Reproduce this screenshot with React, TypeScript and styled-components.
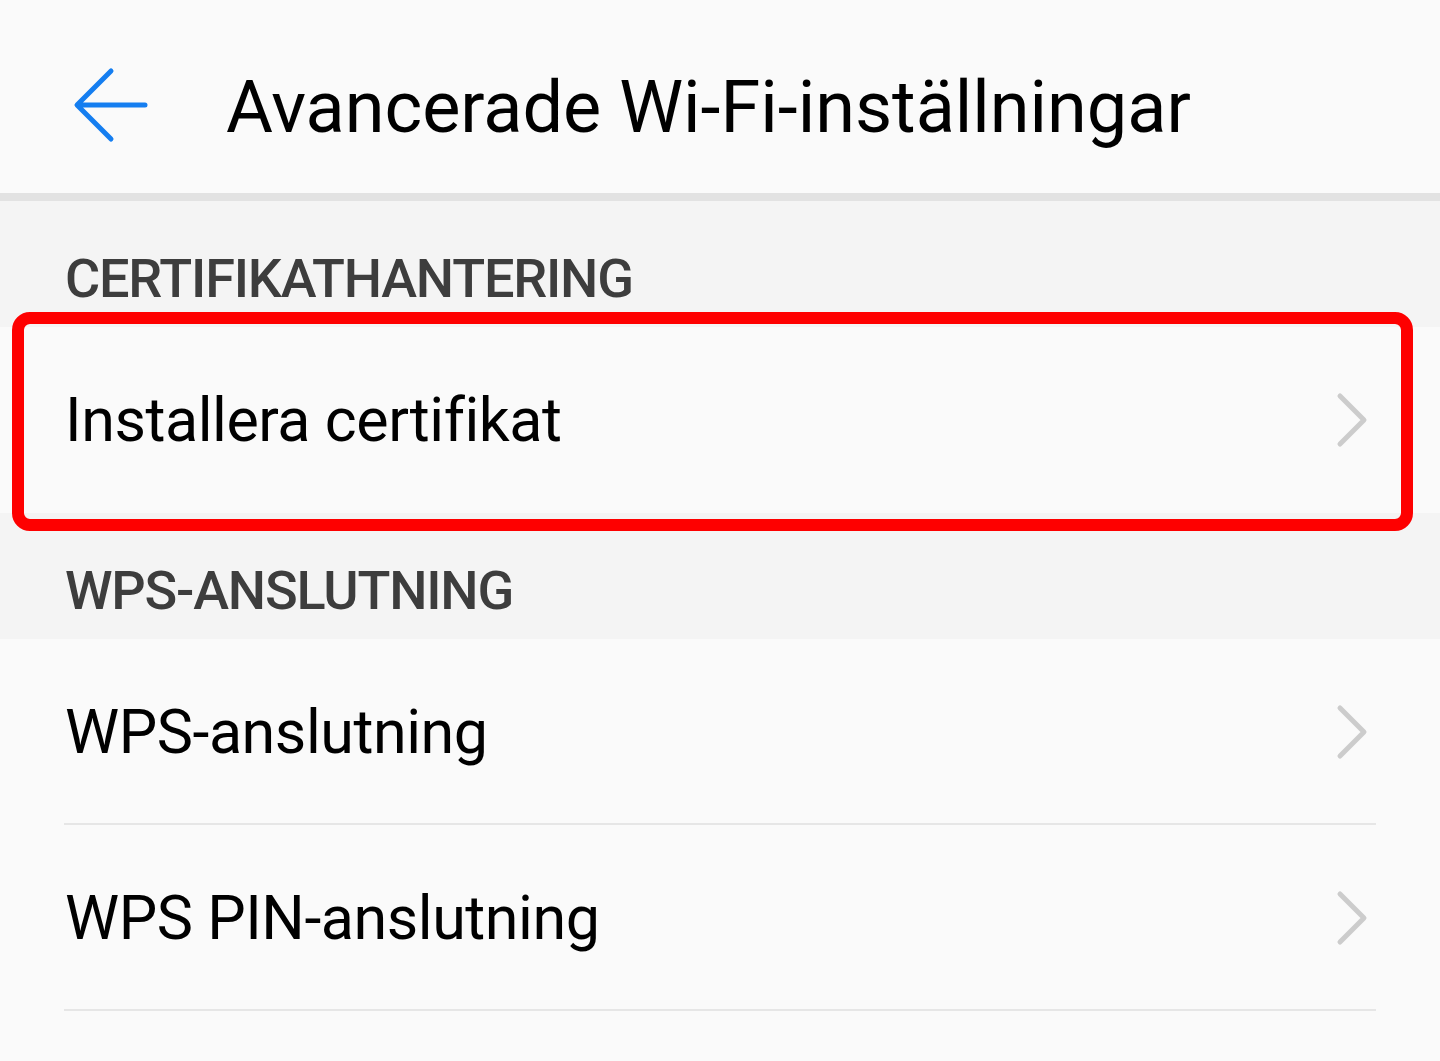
import React from "react";
import styled, { createGlobalStyle } from "styled-components";

const GlobalStyle = createGlobalStyle`
  html, body {
    margin: 0;
    padding: 0;
    background: #fafafa;
  }
  body {
    font-family: Roboto, "Noto Sans", "Liberation Sans", sans-serif;
    -webkit-font-smoothing: antialiased;
  }
`;

const Page = styled.div`
  width: 1440px;
  min-height: 1061px;
  background: #fafafa;
  display: flex;
  flex-direction: column;
`;

const Header = styled.header`
  height: 201px;
  display: flex;
  align-items: center;
  padding-left: 73px;
  padding-top: 16px;
  box-sizing: border-box;
  background: #fafafa;
  border-bottom: 8px solid #e2e2e2;
`;

const BackButton = styled.button`
  width: 78px;
  height: 78px;
  padding: 0;
  border: none;
  background: transparent;
  display: flex;
  align-items: center;
  justify-content: center;
`;

const Title = styled.h1`
  margin: 6px 0 0 75px;
  font-size: 72px;
  font-weight: 400;
  color: #000;
  line-height: 1;
`;

const SectionHeader = styled.div`
  height: 126px;
  background: #f4f4f4;
  box-sizing: border-box;
  padding-left: 65px;
  display: flex;
  align-items: flex-end;
  padding-bottom: 21px;
  font-size: 54px;
  font-weight: 500;
  letter-spacing: -1.2px;
  color: #3d3d3d;
  line-height: 1;
`;

const RowWrap = styled.div`
  position: relative;
`;

const Row = styled.div<{ $divider?: boolean }>`
  position: relative;
  height: 186px;
  box-sizing: border-box;
  background: #fafafa;
  display: flex;
  align-items: center;
  justify-content: space-between;
  padding: 0 70px 0 65px;
  ${(p) =>
    p.$divider &&
    `
    &::after {
      content: "";
      position: absolute;
      left: 64px;
      right: 64px;
      bottom: 0;
      height: 2px;
      background: #e6e6e6;
    }
  `}
`;

const RowLabel = styled.span`
  font-size: 61px;
  font-weight: 400;
  letter-spacing: -0.45px;
  color: #000;
  line-height: 1;
  margin-top: 1px;
`;

const Highlight = styled.div`
  position: absolute;
  top: -15px;
  left: 12px;
  right: 27px;
  bottom: -18px;
  border: 12px solid #fe0000;
  border-radius: 18px;
  pointer-events: none;
`;

const Chevron = () => (
  <svg width="36" height="58" viewBox="0 0 36 58" fill="none">
    <path
      d="M6 5 L30 29 L6 53"
      stroke="#cccccc"
      strokeWidth="5"
      strokeLinecap="round"
      strokeLinejoin="round"
    />
  </svg>
);

const BackArrow = () => (
  <svg width="78" height="78" viewBox="0 0 78 78" fill="none">
    <path
      d="M72 39 H5 M38 5 L4 39 L38 73"
      stroke="#157ef0"
      strokeWidth="5"
      strokeLinecap="round"
      strokeLinejoin="round"
    />
  </svg>
);

export default function App() {
  return (
    <>
      <GlobalStyle />
      <Page>
        <Header>
          <BackButton aria-label="Tillbaka">
            <BackArrow />
          </BackButton>
          <Title>Avancerade Wi-Fi-inställningar</Title>
        </Header>
        <SectionHeader>CERTIFIKATHANTERING</SectionHeader>
        <RowWrap>
          <Row>
            <RowLabel>Installera certifikat</RowLabel>
            <Chevron />
          </Row>
          <Highlight />
        </RowWrap>
        <SectionHeader>WPS-ANSLUTNING</SectionHeader>
        <Row $divider>
          <RowLabel>WPS-anslutning</RowLabel>
          <Chevron />
        </Row>
        <Row $divider>
          <RowLabel>WPS PIN-anslutning</RowLabel>
          <Chevron />
        </Row>
      </Page>
    </>
  );
}
